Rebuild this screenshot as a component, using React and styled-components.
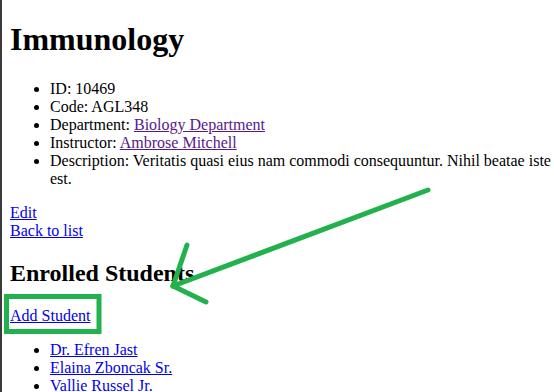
import React from "react"
import styled, { createGlobalStyle } from "styled-components"

const GlobalStyle = createGlobalStyle`
  html {
    border-left: 2px solid #3a3a3a;
    min-height: 100%;
  }
  body {
    margin: 8px 0 8px 8px;
    font-family: "Liberation Serif", "Times New Roman", serif;
    font-size: 16px;
    color: #000000;
    background: #ffffff;
  }
`

const Page = styled.main`
  position: relative;
`
const Title = styled.h1`
  font-size: 2em;
  margin: 13.44px 0 0.67em;
`
const SubTitle = styled.h2`
  font-size: 1.5em;
  margin: 0.83em 0;
`
const DetailList = styled.ul`
  margin: 1em 0;
  padding-left: 40px;
  list-style: disc;
`
const Link = styled.a`
  color: ${props => props.visited ? "#551a8b" : "#0000ee"};
  text-decoration: underline;
  cursor: pointer;
`
const Actions = styled.div`
  display: flex;
  flex-direction: column;
  align-items: flex-start;
`
const Para = styled.p`
  margin: 1em 0;
`
const Overlay = styled.svg`
  position: fixed;
  left: 0;
  top: 0;
  width: 554px;
  height: 392px;
  pointer-events: none;
`

const students = ["Dr. Efren Jast", "Elaina Zboncak Sr.", "Vallie Russel Jr."]

export default function App() {
  return (
    <Page>
      <GlobalStyle />
      <Title>Immunology</Title>
      <DetailList>
        <li>ID: 10469</li>
        <li>Code: AGL348</li>
        <li>Department: <Link visited>Biology Department</Link></li>
        <li>Instructor: <Link visited>Ambrose Mitchell</Link></li>
        <li>Description: Veritatis quasi eius nam commodi consequuntur. Nihil beatae iste est.</li>
      </DetailList>
      <Actions>
        <Link>Edit</Link>
        <Link>Back to list</Link>
      </Actions>
      <SubTitle>Enrolled Students</SubTitle>
      <Para><Link>Add Student</Link></Para>
      <DetailList>
        {students.map(name => <li key={name}><Link>{name}</Link></li>)}
      </DetailList>
      <Overlay viewBox="0 0 554 392">
        <rect x="6.5" y="296.5" width="92.5" height="35" fill="none" stroke="#22b14c" strokeWidth="5" />
        <g stroke="#22b14c" strokeWidth="5" strokeLinecap="round" fill="none">
          <line x1="428" y1="190" x2="173" y2="286" />
          <line x1="187" y1="245" x2="173" y2="286" />
          <line x1="173" y1="286" x2="206" y2="302" />
        </g>
      </Overlay>
    </Page>
  )
}
